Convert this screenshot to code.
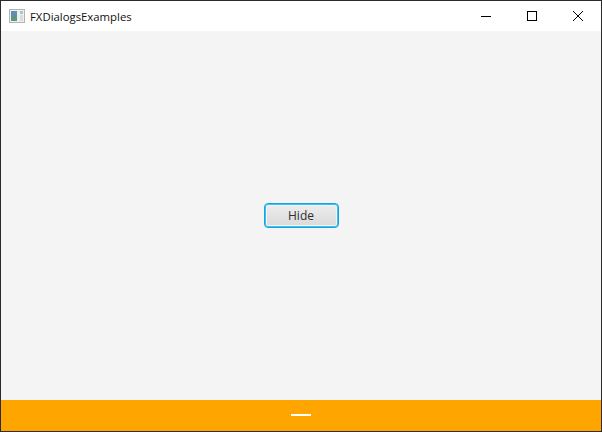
<style>
    :global(body) {
        margin: 0;
    }

    .window {
        box-sizing: border-box;
        width: 602px;
        height: 432px;
        display: flex;
        flex-direction: column;
        border: 1px solid #2b2b2b;
        background: #f4f4f4;
        font-family: "Open Sans", "Noto Sans", sans-serif;
    }

    .titlebar {
        height: 30px;
        flex: none;
        display: flex;
        align-items: center;
        background: white;
    }

    .app-icon {
        width: 16px;
        height: 16px;
        margin-left: 8px;
        flex: none;
    }

    .title {
        margin-left: 5px;
        font-size: 11.35px;
        color: #111;
        flex: 1;
    }

    .controls {
        display: flex;
        height: 100%;
    }

    .control {
        width: 46px;
        display: flex;
        align-items: center;
        justify-content: center;
    }

    .content {
        flex: 1;
        display: flex;
        align-items: center;
        justify-content: center;
    }

    .hide-btn {
        box-sizing: border-box;
        width: 75px;
        height: 25px;
        padding: 0;
        border: 1px solid #12a6e0;
        border-radius: 4px;
        box-shadow: inset 0 0 0 1px #45bdea, inset 0 0 0 2px #f5f5f5;
        background: linear-gradient(#eeeeee, #d9d9d9);
        font-family: inherit;
        font-size: 12px;
        color: #2e2e2e;
    }

    .footer {
        height: 31px;
        flex: none;
        display: flex;
        align-items: center;
        justify-content: center;
        background: orange;
    }

    .dash {
        width: 20px;
        height: 2px;
        margin-bottom: 1px;
        background: white;
    }
</style>

<div class="window">
    <div class="titlebar">
        <svg class="app-icon" viewBox="0 0 16 16">
            <rect x="0.5" y="1.5" width="15" height="13" fill="#f0f0f0" stroke="#b4b4b4"/>
            <rect x="2" y="3" width="6" height="10" fill="#5b9488"/>
            <rect x="2" y="3" width="6" height="4" fill="#5f8fb8"/>
            <rect x="11" y="3" width="3" height="3" fill="#a9cdb4"/>
            <rect x="11" y="7" width="3" height="6" fill="#dcdcdc"/>
        </svg>
        <span class="title">FXDialogsExamples</span>
        <div class="controls">
            <div class="control">
                <svg width="10" height="10" viewBox="0 0 10 10"><path d="M0 5.5H10" stroke="#000" fill="none"/></svg>
            </div>
            <div class="control">
                <svg width="10" height="10" viewBox="0 0 10 10"><rect x="0.5" y="0.5" width="9" height="9" stroke="#000" fill="none"/></svg>
            </div>
            <div class="control">
                <svg width="10" height="10" viewBox="0 0 10 10"><path d="M0 0L10 10M10 0L0 10" stroke="#000" stroke-width="1" fill="none"/></svg>
            </div>
        </div>
    </div>
    <div class="content">
        <button class="hide-btn">Hide</button>
    </div>
    <div class="footer">
        <div class="dash"></div>
    </div>
</div>
